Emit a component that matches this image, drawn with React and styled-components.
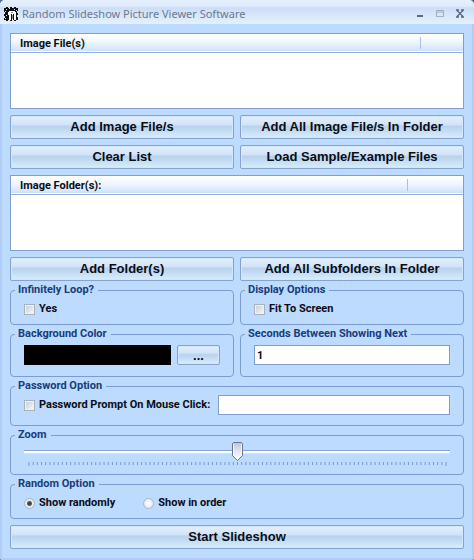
import { useState } from 'react';
import styled, { createGlobalStyle } from 'styled-components';

const GlobalStyle = createGlobalStyle`
  * { box-sizing: border-box; }
  body {
    margin: 0;
    background: #4c6a9f;
    color: #0b0d14;
    font: bold 11px/14px Roboto, "Liberation Sans", Arial, sans-serif;
  }
  input, button { font: inherit; color: inherit; }
`;

const Window = styled.div`
  display: flex;
  flex-direction: column;
  min-height: 100vh;
  border-radius: 5px 5px 3px 3px;
  overflow: hidden;
  background: #bddaff;
`;

const TitleBar = styled.header`
  display: flex;
  align-items: center;
  gap: 4px;
  height: 24px;
  padding: 4px 8px 0 4px;
  background: linear-gradient(#e6f0fd 0, #dfebfc 6px, #cdddf6 8px, #d6e5fa 14px, #e2effe 23px);
`;

const Title = styled.h1`
  flex: 1;
  margin: 0;
  color: #6c7891;
  font: 11px/16px "Noto Sans", sans-serif;
`;

const WindowButtons = styled.div`
  display: flex;
  gap: 8px;
`;

const WindowButton = styled.button`
  display: grid;
  place-items: center;
  width: 12px;
  height: 16px;
  padding: 0;
  border: 0;
  background: none;
  color: ${({ $muted }) => ($muted ? '#a3afbf' : '#5c6a80')};
`;

const Frame = styled.main`
  flex: 1;
  padding: 9px 8px 8px;
  border: solid #b0ccf7;
  border-width: 0 2px 2px;
`;

const Stack = styled.div`
  display: grid;
  gap: 6px;
`;

const Groups = styled.div`
  display: grid;
  gap: 2px;
  margin: 2px 0 6px;
`;

const TwoCol = styled.div`
  display: grid;
  grid-template-columns: 1fr 1fr;
  gap: 6px;
`;

const ListBox = styled.div`
  height: 76px;
  border: 1px solid #7f9fd3;
  background: #fff;
`;

const ListTable = styled.table`
  width: 100%;
  border-collapse: collapse;
  table-layout: fixed;
`;

const HeadRow = styled.tr`
  height: 18px;
  background: linear-gradient(#fff, #f3f8ff 40%, #cfe1fa);
  border-bottom: 1px solid #92b0e2;
`;

const HeadCell = styled.th`
  width: ${({ $width }) => $width || 'auto'};
  padding: 2px 9px 0;
  text-align: left;
  background: ${({ $divider }) => ($divider ? 'linear-gradient(#a9c0e4, #a9c0e4) 0 3px / 1px 12px no-repeat' : 'none')};
`;

const Button = styled.button`
  width: ${({ $width }) => $width || '100%'};
  height: ${({ $small }) => ($small ? '20px' : '24px')};
  padding: 0;
  border: 1px solid #86a3d0;
  border-radius: 2px;
  background: linear-gradient(#e3effd 0, #d3e4f8 38%, #b9d3ef 48%, #c2dbf4 65%, #d9edfc 100%);
  box-shadow: inset 0 0 0 1px #d3e5fb;
  font-family: "Liberation Sans", Arial, sans-serif;
  font-size: 13px;
  line-height: 20px;
`;

const Group = styled.fieldset`
  min-width: 0;
  height: ${({ $height }) => $height};
  margin: 0;
  padding: 0 13px 0 13px;
  border: 1px solid #7b9cd0;
  border-radius: 4px;
`;

const Legend = styled.legend`
  margin-left: -9px;
  padding: 0 4px 0 3px;
  color: #173d7a;
`;

const Row = styled.div`
  display: flex;
  align-items: center;
  gap: ${({ $gap }) => $gap || '6px'};
  height: ${({ $height }) => $height || '24px'};
`;

const Choice = styled.label`
  display: inline-flex;
  align-items: center;
  gap: 4px;
  white-space: nowrap;
`;

const CheckBox = styled.input.attrs({ type: 'checkbox' })`
  appearance: none;
  width: 11px;
  height: 11px;
  margin: 0;
  border: 1px solid #a8b2bf;
  background: linear-gradient(135deg, #c3cbd4, #fafbfc);
  box-shadow: inset 0 0 0 1px #eef1f5;
  &:checked { background: #47566e; }
`;

const Radio = styled.input.attrs({ type: 'radio' })`
  appearance: none;
  width: 11px;
  height: 11px;
  margin: 0;
  border: 1px solid #a9b6c7;
  border-radius: 50%;
  background: radial-gradient(#fdfdfd, #dce3eb);
  &:checked { background: radial-gradient(#2f3a42 0, #4c5a62 2px, #e6ebf0 3px); }
`;

const TextBox = styled.input`
  flex: 1;
  min-width: 0;
  height: 20px;
  padding: 0 2px;
  border: 1px solid #7f9fd3;
  border-radius: 0;
  background: #fff;
`;

const Swatch = styled.div`
  flex: 1;
  height: 20px;
  background: #000;
`;

const thumb = encodeURIComponent(
  '<svg xmlns="http://www.w3.org/2000/svg" width="11" height="19"><defs><linearGradient id="g" x2="0" y2="1"><stop stop-color="#b9c6d6"/><stop offset=".5" stop-color="#e3e7ec"/><stop offset="1" stop-color="#fff"/></linearGradient></defs><path d="M1.5.5h8l1 1v12l-5 5-5-5v-12z" fill="url(#g)" stroke="#66758f"/><path d="M1.5 2v11l4 4 4-4V2" fill="none" stroke="#fff" stroke-opacity=".7"/></svg>'
);

const Slider = styled.input.attrs({ type: 'range' })`
  appearance: none;
  display: block;
  width: 100%;
  height: 19px;
  margin: 0;
  background: linear-gradient(#86a5d6 0 1px, #fff 1px 3px, #d3e2fb 3px 4px) 0 8px / 100% 4px no-repeat;
  &::-webkit-slider-thumb {
    appearance: none;
    width: 11px;
    height: 19px;
    background: url("data:image/svg+xml,${thumb}");
  }
`;

const TickMarks = styled.svg`
  display: block;
  width: 100%;
  height: 4px;
  overflow: visible;
`;

const TickRow = styled.div`
  padding: 1px 4px 0 5px;
`;

function AppIcon() {
  return (
    <svg width="14" height="14" viewBox="0 0 14 14" shapeRendering="crispEdges" aria-hidden="true">
      <path fill="#10120f" d="M0 1h2V0h2v1h2V0h2v1h2V0h2v1h2v3h-1v2h1v2h-1v2h1v3h-2v1h-2v-1H8v1H6v-1H4v1H2v-1H0v-2h1V9H0V7h1V5H0z" />
      <path fill="#e9ecdc" d="M2 2h1v1H2zM5 1h1v1H5zM10 2h1v1h-1zM1 4h1v1H1zM2 8h1v1H2zM1 11h1v1H1zM12 3h1v1h-1z" />
      <path fill="#fff" d="M5 4h6v1h1v8h-2V7H9v6H8V7H7v6H5V8H4V5h1z" />
      <path fill="#8a8d84" d="M7 5h2v1H7zM8 8h1v4H8z" />
    </svg>
  );
}

function FileList({ label, lastWidth }) {
  return (
    <ListBox>
      <ListTable>
        <thead>
          <HeadRow>
            <HeadCell scope="col">{label}</HeadCell>
            <HeadCell as="td" $width={lastWidth} $divider />
          </HeadRow>
        </thead>
        <tbody />
      </ListTable>
    </ListBox>
  );
}

function Ticks({ count = 100 }) {
  return (
    <TickRow>
      <TickMarks aria-hidden="true">
        {Array.from({ length: count + 1 }, (_, i) => {
          const x = `${(i * 100) / count}%`;
          const end = i === 0 || i === count;
          return <line key={i} x1={x} x2={x} y1="0" y2={end ? 4 : 3} stroke="#7898cd" />;
        })}
      </TickMarks>
    </TickRow>
  );
}

export default function App() {
  const [seconds, setSeconds] = useState('1');
  const [password, setPassword] = useState('');
  const [zoom, setZoom] = useState(50);
  const [order, setOrder] = useState('random');

  return (
    <>
      <GlobalStyle />
      <Window>
        <TitleBar>
          <AppIcon />
          <Title>Random Slideshow Picture Viewer Software</Title>
          <WindowButtons>
            <WindowButton aria-label="Minimize">
              <svg width="10" height="10"><path d="M2 6h6v2H2z" fill="currentColor" /></svg>
            </WindowButton>
            <WindowButton aria-label="Maximize" $muted>
              <svg width="10" height="10"><path d="M1.5 1.5h7v6h-7zM1 3h8" fill="none" stroke="currentColor" /></svg>
            </WindowButton>
            <WindowButton aria-label="Close">
              <svg width="10" height="10"><path d="M2 1.5l6 6M8 1.5l-6 6M1 1h3M6 1h3M1 8h3M6 8h3" fill="none" stroke="currentColor" strokeWidth="1.3" /></svg>
            </WindowButton>
          </WindowButtons>
        </TitleBar>

        <Frame>
          <Stack>
            <FileList label="Image File(s)" lastWidth="43px" />
            <TwoCol>
              <Button>Add Image File/s</Button>
              <Button>Add All Image File/s In Folder</Button>
              <Button>Clear List</Button>
              <Button>Load Sample/Example Files</Button>
            </TwoCol>
            <FileList label="Image Folder(s):" lastWidth="56px" />
            <TwoCol>
              <Button>Add Folder(s)</Button>
              <Button>Add All Subfolders In Folder</Button>
            </TwoCol>
          </Stack>

          <Groups>
            <TwoCol>
              <Group $height="42px">
                <Legend>Infinitely Loop?</Legend>
                <Row>
                  <Choice><CheckBox />Yes</Choice>
                </Row>
              </Group>
              <Group $height="42px">
                <Legend>Display Options</Legend>
                <Row>
                  <Choice><CheckBox />Fit To Screen</Choice>
                </Row>
              </Group>
            </TwoCol>
            <TwoCol>
              <Group $height="50px">
                <Legend>Background Color</Legend>
                <Row $height="28px">
                  <Swatch />
                  <Button $small $width="43px" aria-label="Choose background color">...</Button>
                </Row>
              </Group>
              <Group $height="50px">
                <Legend id="seconds">Seconds Between Showing Next</Legend>
                <Row $height="28px">
                  <TextBox aria-labelledby="seconds" value={seconds} onChange={(e) => setSeconds(e.target.value)} />
                </Row>
              </Group>
            </TwoCol>
            <Group $height="47px">
              <Legend>Password Option</Legend>
              <Row $gap="8px">
                <Choice><CheckBox />Password Prompt On Mouse Click:</Choice>
                <TextBox aria-label="Password" value={password} onChange={(e) => setPassword(e.target.value)} />
              </Row>
            </Group>
            <Group $height="47px">
              <Legend id="zoom">Zoom</Legend>
              <Slider aria-labelledby="zoom" value={zoom} onChange={(e) => setZoom(Number(e.target.value))} />
              <Ticks />
            </Group>
            <Group $height="42px">
              <Legend>Random Option</Legend>
              <Row $gap="28px">
                <Choice>
                  <Radio name="order" checked={order === 'random'} onChange={() => setOrder('random')} />
                  Show randomly
                </Choice>
                <Choice>
                  <Radio name="order" checked={order === 'ordered'} onChange={() => setOrder('ordered')} />
                  Show in order
                </Choice>
              </Row>
            </Group>
          </Groups>

          <Button>Start Slideshow</Button>
        </Frame>
      </Window>
    </>
  );
}
